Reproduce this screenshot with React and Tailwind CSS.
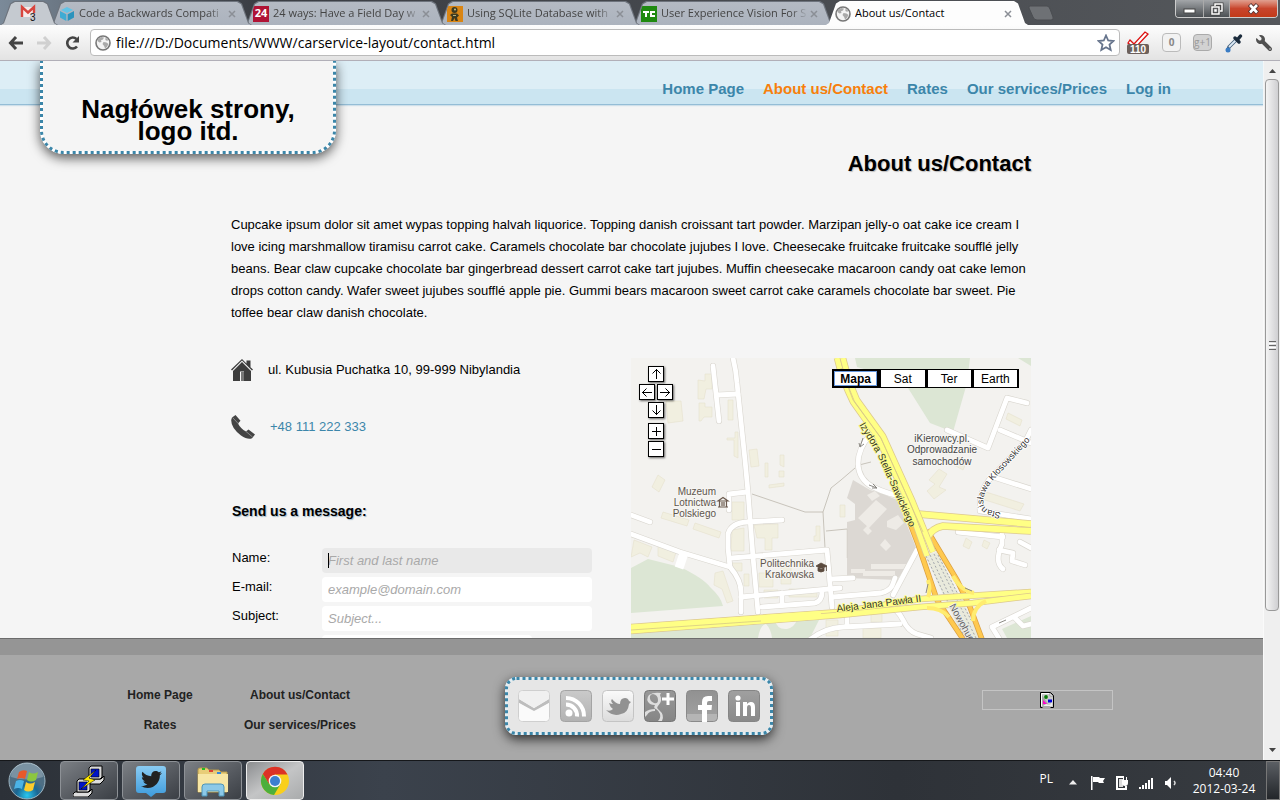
import React from 'react';
import { FaTwitter, FaWrench } from 'react-icons/fa';

const UI = "font-['Open_Sans','Noto_Sans',sans-serif]";

const TAB_CLIP =
  '[clip-path:polygon(0_100%,3px_92%,10px_10%,14px_0,calc(100%_-_14px)_0,calc(100%_-_10px)_10%,calc(100%_-_3px)_92%,100%_100%)]';

function Globe() {
  return (
    <svg width="16" height="16" viewBox="0 0 16 16" className="shrink-0" aria-hidden="true">
      <circle cx="8" cy="8" r="7" fill="#f4f4f4" stroke="#777" strokeWidth="1.6" />
      <path d="M3 4l3-2 3 .6-1 1.9-2 .7.5 1.8-2 .4L2.4 6zM8.5 7l3 .5 2 1.5-1.6 3-1.8 1.6-1-2.7-1.6-1.8z" fill="#aaa" />
      <path d="M10.5 2.5l2.5 2-.6 1.6-2-1.2z" fill="#aaa" />
    </svg>
  );
}

function Gmail() {
  return (
    <svg width="18" height="18" viewBox="0 0 18 18" aria-hidden="true">
      <path d="M1 3h14v10H1z" fill="#f6eaea" />
      <path d="M2 13V3l6 5.500L14 3v10" fill="none" stroke="#d8453e" strokeWidth="2.4" />
      <rect x="10" y="9" width="7" height="9" fill="#c8ccd2" opacity=".85" />
      <text x="10" y="17" fontSize="10" fontFamily="Liberation Sans, sans-serif" fill="#111">3</text>
    </svg>
  );
}

function Cube() {
  return (
    <svg width="16" height="16" viewBox="0 0 16 16" className="shrink-0" aria-hidden="true">
      <path d="M8 1l6 3-6 3-6-3z" fill="#63c3e6" />
      <path d="M1 5l6.3 3.2V15L1 11.5z" fill="#3fabd3" />
      <path d="M15 5L8.7 8.2V15L15 11.5z" fill="#2b93bd" />
    </svg>
  );
}

function TwentyFour() {
  return (
    <span className="flex h-4 w-4 shrink-0 items-center justify-center bg-[#b01335] text-[11px] font-bold text-white">24</span>
  );
}

function Robot() {
  return (
    <svg width="16" height="16" viewBox="0 0 16 16" className="shrink-0" aria-hidden="true">
      <rect width="16" height="16" fill="#d98514" />
      <circle cx="7.5" cy="4" r="3" fill="#3c3a22" />
      <circle cx="8" cy="3.6" r="1" fill="#c6c28a" />
      <path d="M5 7.5h5l2 2-2 2 1 3.5H8.500l-1-3-1.500 3H4l1-4-2-2z" fill="#3c3a22" />
      <path d="M6 9h3v1H6z" fill="#b7b37a" />
    </svg>
  );
}

function TechSite() {
  return (
    <svg width="16" height="16" viewBox="0 0 16 16" className="shrink-0" aria-hidden="true">
      <rect width="16" height="16" fill="#1f8a10" />
      <path d="M2 5h6v2H6v4H4V7H2zM9 5h5v2h-3v2h3v2H9z" fill="#fff" />
    </svg>
  );
}

function Tab({ icon, title, active, layer }) {
  return (
    <div className={`relative -ml-2 h-6 w-[202px] min-w-0 ${layer}`}>
      <div className={`h-full pt-px ${TAB_CLIP} ${active ? 'bg-white' : 'bg-[#6d737c]'}`}>
        <div className={`mx-px flex h-full items-center pr-[13px] pl-2 ${TAB_CLIP} ${active ? 'bg-[#fdfdfd]' : 'bg-gradient-to-b from-[#b4bac3] to-[#acb3be]'}`}>
          {icon}
          <span className={`ml-1 min-w-0 flex-1 overflow-hidden text-[11px] whitespace-nowrap ${active ? 'text-black' : 'text-[#444] [mask-image:linear-gradient(to_right,#000_88%,transparent)]'}`}>
            {title}
          </span>
          <button aria-label="Close tab" className="flex w-3 shrink-0 justify-center">
            <svg width="8" height="8" viewBox="0 0 8 8"><path d="M1 1l6 6M7 1L1 7" stroke="#8b8f96" strokeWidth="1.5" /></svg>
          </button>
        </div>
      </div>
    </div>
  );
}

function TabStrip() {
  return (
    <div className="flex h-[25px] items-end overflow-hidden bg-gradient-to-r from-[#7b8a99] via-[#3a3d43] via-20% to-[#55585c]">
      <div className="relative z-50 h-6 w-[58px] shrink-0">
        <div className={`h-full bg-[#6d737c] pt-px ${TAB_CLIP}`}>
          <div className={`mx-px flex h-full justify-center bg-[#c5cad0] pt-0.5 ${TAB_CLIP}`}><Gmail /></div>
        </div>
      </div>
      <Tab layer="z-40" icon={<Cube />} title="Code a Backwards Compati" />
      <Tab layer="z-30" icon={<TwentyFour />} title="24 ways: Have a Field Day w" />
      <Tab layer="z-20" icon={<Robot />} title="Using SQLite Database with" />
      <Tab layer="z-10" icon={<TechSite />} title="User Experience Vision For S" />
      <Tab layer="z-50" icon={<Globe />} title="About us/Contact" active />
      <button aria-label="New tab" className="mb-1 h-4 w-7 shrink-0">
        <svg width="26" height="16" viewBox="0 0 26 16"><path d="M2 1h17q2 0 3 3l3 8q1 3-2 3H9q-3 0-4-3L1 3q-.5-2 1-2z" fill="#6e7175" stroke="#4a4d51" /></svg>
      </button>
      <div className="mr-[2px] ml-auto flex h-[18px] shrink-0 self-start overflow-hidden rounded-b border border-t-0 border-[#ccc]">
        <button aria-label="Minimize" className="flex w-7 items-center justify-center border-r border-[#aaa] bg-gradient-to-b from-[#a3a6a9] to-[#4c5054]">
          <svg width="13" height="10"><rect x="1" y="5" width="11" height="4" fill="#fff" stroke="#444" /></svg>
        </button>
        <button aria-label="Restore" className="flex w-[26px] items-center justify-center border-r border-[#aaa] bg-gradient-to-b from-[#a3a6a9] to-[#4c5054]">
          <svg width="14" height="14" fill="none"><path d="M5 4V2h7v7h-2M2 5h7v7H2z" stroke="#444" strokeWidth="3" /><path d="M5 4V2h7v7h-2M2 5h7v7H2zM5 8h1v1H5z" stroke="#fff" strokeWidth="1.500" /></svg>
        </button>
        <button aria-label="Close" className="flex w-[47px] items-center justify-center bg-gradient-to-b from-[#e0a090] via-[#c8452c] to-[#c23a18]">
          <svg width="14" height="12"><path d="M2.500 1.500l8 8.500M10.500 1.500l-8 8.500" stroke="#533" strokeWidth="4.500" /><path d="M3 2l7 7.500M10 2L3 9.500" stroke="#fff" strokeWidth="2.600" /></svg>
        </button>
      </div>
    </div>
  );
}

function Toolbar() {
  return (
    <div className="flex h-9 items-center border-b border-[#b1afb8] bg-gradient-to-b from-[#fdfdfd] to-[#e3e3e3] pr-2 pl-2">
      <button aria-label="Back" className="w-7">
        <svg width="16" height="14" fill="none" stroke="#444" strokeWidth="3"><path d="M8 1L2.500 7 8 13M3 7h12" /></svg>
      </button>
      <button aria-label="Forward" className="w-7">
        <svg width="16" height="14" fill="none" stroke="#d0d0d0" strokeWidth="3"><path d="M8 1l5.500 6L8 13M13 7H1" /></svg>
      </button>
      <button aria-label="Reload" className="w-[26px]">
        <svg width="17" height="16" fill="none"><path d="M13 11.500A5.500 5.500 0 1 1 12.500 4" stroke="#444" strokeWidth="2.600" /><path d="M15 1v6.500H8.500z" fill="#444" /></svg>
      </button>
      <div className="flex h-[27px] min-w-0 flex-1 items-center rounded border border-[#bbb] bg-white px-1">
        <Globe />
        <input aria-label="Address" className="ml-[5px] min-w-0 flex-1 bg-transparent text-sm text-black outline-none" defaultValue="file:///D:/Documents/WWW/carservice-layout/contact.html" />
        <button aria-label="Bookmark">
          <svg width="18" height="18" viewBox="0 0 18 18"><path d="M9 1.500l2.200 5 5.300.5-4 3.600 1.200 5.400L9 13.200 4.300 16l1.200-5.400-4-3.600 5.300-.5z" fill="#fff" stroke="#66748c" strokeWidth="1.800" /></svg>
        </button>
      </div>
      <div className="ml-1.5 flex items-center gap-3">
        <button aria-label="Checker, 110 issues">
          <svg width="24" height="24" viewBox="0 0 24 24">
            <path d="M4 9l4 4L19 1l3 2L9 17 2 12z" fill="#fff" stroke="#d11" strokeWidth="1.300" />
            <rect x="1" y="13" width="22" height="10" rx="2" fill="#6c605b" />
            <text x="12" y="22" fontSize="10" fontWeight="700" textAnchor="middle" fill="#fff" fontFamily="Liberation Sans, sans-serif">110</text>
          </svg>
        </button>
        <button className="flex h-[19px] w-[19px] items-center justify-center rounded-sm border border-[#bbb] bg-[#f2f2f2] text-[10px] font-bold text-[#888]">0</button>
        <button className="flex h-[17px] w-[19px] items-center justify-center rounded-sm border border-[#aaa] bg-[#d2d2d2] text-[10px] whitespace-nowrap text-[#999]">g+1</button>
        <button aria-label="Color picker">
          <svg width="20" height="20" viewBox="0 0 20 20"><path d="M13 6L5 14l-1 3" stroke="#45617c" strokeWidth="3.500" fill="none" /><path d="M12 7l-7 7" stroke="#dce9f5" strokeWidth="1.800" /><circle cx="4" cy="17" r="2.500" fill="#3a7cc4" /><path d="M11 5l4 4M14 6l2.500-3" stroke="#1b2b3c" strokeWidth="3.500" strokeLinecap="round" /></svg>
        </button>
        <button aria-label="Settings"><FaWrench size={16} color="#505050" className="-scale-x-100" /></button>
      </div>
    </div>
  );
}

function NavLinks() {
  const link = 'text-[#3c86aa]';
  return (
    <nav className="ml-auto flex gap-[19px] pt-[19px] pr-[92px] text-[15px] leading-[18px] font-bold whitespace-nowrap">
      <a href="#home" className={link}>Home Page</a>
      <a href="#about" className="text-[#f77f0c]">About us/Contact</a>
      <a href="#rates" className={link}>Rates</a>
      <a href="#services" className={link}>Our services/Prices</a>
      <a href="#login" className={link}>Log in</a>
    </nav>
  );
}

function SiteHeader() {
  return (
    <header className="relative z-10 flex h-11 shrink-0 items-start border-b border-[#94bdd6] bg-[linear-gradient(#ddeef6_28px,#cbe5f1_28px)] shadow-[0_1px_1px_#cfe0ea]">
      <div className="relative ml-10 flex h-[93px] w-[296px] shrink-0 items-end justify-center rounded-b-3xl bg-[#f5f5f5] pb-3 shadow-[0_4px_12px_rgba(0,0,0,0.65)] [clip-path:inset(0_-30px_-30px_-30px)]">
        <svg className="absolute inset-0 h-full w-full overflow-hidden" fill="none" aria-hidden="true">
          <rect x="1.5" y="-40" width="293" height="131.500" rx="22" stroke="#fff" strokeWidth="3" />
          <rect x="1.5" y="-40" width="293" height="131.500" rx="22" stroke="#3b86a9" strokeWidth="3" strokeDasharray="3 3" />
        </svg>
        <h1 className="w-60 text-center text-[26px] leading-[22px] font-bold text-black">Nagłówek strony, logo itd.</h1>
      </div>
      <NavLinks />
    </header>
  );
}

const whiteRoads = [
  'M102 0Q105 12 106 25L114 102L117 134L122 199L127 254',
  'M82 8L88 63', 'M86 37L107 36', 'M98 152V136L116 134',
  'M0 157L19 164', 'M0 176L49 194L99 209Q110 222 110 234V254',
  'M151 162L116 164Q100 165 97 176V190L99 209',
  'M101 200L196 192L201 249', 'M110 239L209 230', 'M131 249L184 245Q191 243 191 234', 'M151 235V247',
  'M201 221L222 220', 'M202 239L250 235Q258 233 261 228L264 220', 'M286 192L262 237',
  'M176 284Q192 270 212 269L269 266', 'M216 255V268', 'M255 246Q267 251 272 262T286 276L300 280',
  'M240 76Q227 90 227 106Q228 122 242 129Q258 137 276 139',
  'M396 45L376 40L357 90L316 72', 'M369 72L400 85', 'M362 119L400 131',
  'M400 72L394 84L358 122Q348 134 349 153L400 161',
  'M327 174L372 179', 'M371 171V186Q363 204 372 211', 'M368 192L382 195L381 203L394 207', 'M389 184L400 190',
  'M400 250L361 269L369 282', 'M384 260L392 268L400 266',
];

const buildings = [
  'M35 43h15l2 20-15 2z', 'M67 22l7 1v-7h7v15h-6l-2 10h-6zM68 45h6v4h7v10h-8l-3 4h-2z', 'M97 42h5v20h-5z', 'M96 80h8v-6h3v26l-4-2v-16h-7z',
  'M118 92l8-1 2 17-8 1z', 'M27 117l7 5-6 12-7-5z', 'M149 97h4v12l-4-2zM148 113h5v6h-5z', 'M134 105h3v14h-3z', 'M138 127l15-2v3l-15 2z',
  'M32 154l26 8-2 6-26-8zM64 165l26 9-2 6-26-9z', 'M101 144h12v18h-12zM101 172l12-2v23h-13z', 'M123 167l24-1v14h-6v12h-7v-12h-8z',
  'M3 182l18 7-4 10-8-4-9 4zM27 187l18 7-3 10-15-6z', 'M84 215l8-2 10 30-6 2-5-14-8-4zM101 205h10v8h-8z', 'M113 216h5v12h-5zM185 168h4v15h-6v-5h2z',
  'M128 215h14v14h-14zM150 206h10v20h-10z', 'M298 122l10-11 8 5-8 13 7 3-12 9-7-8 8-7z', 'M326 98l10 5-4 9-9-5z', 'M377 55l14 7-2 6-14-7z',
  'M355 134l38 12-4 7-38-12z', 'M335 180l6 4-3 7-6-3zM353 182l6 3-3 6-5-3z', 'M195 262h12v16h-12zM240 252h11v12h-11zM232 270h18v10h-18z', 'M133 232h14v8h-14zM158 231h28v8h-28z',
  'M209 147h5v12h-5z',
];

function Road({ d, width, color = '#ffff85', edge = '#ddc98e' }) {
  return (
    <g fill="none">
      <path d={d} stroke={edge} strokeWidth={width + 1.5} />
      <path d={d} stroke={color} strokeWidth={width} />
    </g>
  );
}

function MapDrawing() {
  return (
    <svg viewBox="0 0 400 280" className="block h-full w-full" fontFamily="Liberation Sans, sans-serif" role="img" aria-label="Map of the area">
      <rect width="400" height="280" fill="#f3f2ef" />
      <g fill="#dce6d4">
        <path d="M0 210L17 201L49 209Q72 220 79 229Q90 239 92 248L0 255z" />
        <path d="M0 272L127 266L189 260L179 280H0z" />
        <path d="M224 0H339L336 25L322 74L299 65L277 30L250 16L226 9z" />
        <path d="M371 271L400 258V280H376z" />
        <path d="M387 0H400V8z" />
      </g>
      <path d="M127 280q2-13 8-14 5 5 6 14zM144 262q2 10 12 9 8-2 10-10z" fill="#f3f2ef" />
      <path d="M222 122L239 132L252 136L266 142L286 192L266 222L216 220V164L224 162V146L216 140z" fill="#dcd8d3" />
      <path d="M227 160l18-18 11 9-18 19zM236 137l8-4 5 5-8 5zM256 163l11-6 6 8-8 7-9-3zM249 187l5-6 6 7-5 5zM232 172l4-4 5 5-4 4zM240 206h35v5h-35zM232 213h32v5h-32zM220 211h14v4h-14z" fill="#eeebe6" />
      <g fill="#f1efe0" stroke="#e5e1cd" strokeWidth=".6">{buildings.map((d) => <path key={d} d={d} />)}</g>
      <g fill="none" stroke="#bcb8ad" strokeWidth=".8">
        <path d="M121 136L174 154H192L200 130L210 122L224 110M192 154L194 190M195 173L216 171M224 108L240 104" />
        <path d="M216 171V200" opacity=".4" />
      </g>
      <g fill="none" stroke="#d9d6cf" strokeWidth="6" strokeLinecap="round" strokeLinejoin="round">{whiteRoads.map((d) => <path key={d} d={d} />)}</g>
      <g fill="none" stroke="#fff" strokeWidth="4.800" strokeLinecap="round" strokeLinejoin="round">{whiteRoads.map((d) => <path key={d} d={d} />)}</g>
      <path d="M53 195L48 210" stroke="#fff" strokeWidth="9" />

      <path d="M294 197L306 194L350 280H332z" fill="#e9eadc" />
      <g fill="none" stroke="#8f94a0" strokeWidth=".8" strokeDasharray="2 2">
        <path d="M295 198L334 280M299 197L339 280M303 196L345 280M307 197L340 262" />
      </g>
      <Road d="M279 165L287 186L306 242L334 284" width={4} color="#ffc94f" edge="#dba040" />
      <Road d="M296 172L326 222L339 249L352 284" width={4} color="#ffc94f" edge="#dba040" />
      <Road d="M287 156L400 166" width={6} />
      <Road d="M296 180Q301 170 312 168L400 173" width={6} />
      <Road d="M0 269L209 254L289 241L400 234" width={5} />
      <Road d="M0 273L209 257L289 249L342 245L400 238" width={5} />
      <path d="M0 271L190 257" stroke="#ffff85" strokeWidth="8" />
      <Road d="M206 0Q211 22 222 44L246 78L275 139L296 198" width={5} />
      <Road d="M212 0Q218 24 226 42L252 78L281 142L302 194" width={5} />
      <path d="M297 222Q300 232 297 239M322 218Q330 233 343 235M342 263Q342 249 355 243M296 250Q310 250 318 259" fill="none" stroke="#ffec70" strokeWidth="4" />
      <path d="M0 272L130 263M210 10L222 42L250 80L292 174" stroke="#d7c985" strokeWidth=".8" fill="none" />
      <path d="M232 80l-3 9m0 0l-1-4m1 4l4-3M238 127l8 3m0 0l-4-4m4 4h-5M295 235l2-9M334 230l7 3M368 265l7-3" stroke="#8c8a84" fill="none" />

      <g fontSize="10" fill="#5e554d" stroke="#f7f6f3" strokeWidth="2" paintOrder="stroke" strokeLinejoin="round">
        <text x="85" y="137" textAnchor="end">Muzeum</text>
        <text x="85" y="148" textAnchor="end">Lotnictwa</text>
        <text x="85" y="159" textAnchor="end">Polskiego</text>
        <text x="183" y="209" textAnchor="end">Politechnika</text>
        <text x="183" y="220" textAnchor="end">Krakowska</text>
      </g>
      <g fontSize="10" fill="#444" stroke="#f7f6f3" strokeWidth="2" paintOrder="stroke" textAnchor="middle">
        <text x="311" y="84">iKierowcy.pl.</text>
        <text x="311" y="95">Odprowadzanie</text>
        <text x="311" y="107">samochodów</text>
      </g>
      <path id="izydora" d="M228 67L246 96L278 168" fill="none" />
      <path id="klos" d="M370 155L359 152Q350 149 353 138Q356 128 366 118L404 77" fill="none" />
      <g fontSize="10" fill="#333">
        <text stroke="#ffff85" strokeWidth="1.500" paintOrder="stroke"><textPath href="#izydora">Izydora Stella-Sawickiego</textPath></text>
        <text fontSize="9" stroke="#fff" strokeWidth="1.500" paintOrder="stroke"><textPath href="#klos">Stanisława Kłosowskiego</textPath></text>
        <text transform="translate(206 254) rotate(-7)" stroke="#ffff85" strokeWidth="1.500" paintOrder="stroke">Aleja Jana Pawła II</text>
        <text transform="translate(318 248) rotate(61)" fill="#666" stroke="#eee" strokeWidth="1.500" paintOrder="stroke">Nowohucka</text>
      </g>
      <path d="M87 143l5-3.500 5 3.500zM88.500 143v6M95.500 143v6M91 144v4M93 144v4M87 149h10" fill="none" stroke="#6b5a4e" strokeWidth="1.200" />
      <path d="M185 208l5-3 6 3-6 3zM187 210v3q3 2 6 0v-3M195.500 208v5" fill="#5a4a3e" stroke="#5a4a3e" strokeWidth=".8" />
    </svg>
  );
}

function MapButton({ label, d }) {
  return (
    <button aria-label={label} className="h-4 w-4 border border-black bg-white shadow-[1px_1px_2px_rgba(0,0,0,0.6)]">
      <svg width="14" height="14" viewBox="0 0 14 14" fill="none" stroke="#000"><path d={d} /></svg>
    </button>
  );
}

function LocationMap() {
  const type = 'flex-1 border border-l-2 border-black bg-white leading-4 first:border-2';
  return (
    <div className="relative h-[280px] w-[400px] shrink-0 overflow-hidden">
      <MapDrawing />
      <div className="absolute top-2 left-2 flex w-[34px] flex-col items-center gap-0.5">
        <MapButton label="Pan up" d="M7.500 2v10M3.500 6.500l4-4 4 4" />
        <div className="flex w-full justify-between">
          <MapButton label="Pan left" d="M2 7.500h10M6.500 3.500l-4 4 4 4" />
          <MapButton label="Pan right" d="M2 7.500h10M7.500 3.500l4 4-4 4" />
        </div>
        <MapButton label="Pan down" d="M7.500 2v10M3.500 7.500l4 4 4-4" />
        <div className="flex flex-col gap-0.5 pt-[3px]">
          <MapButton label="Zoom in" d="M7.500 3v9M3 7.500h9" />
          <MapButton label="Zoom out" d="M3 7.500h9" />
        </div>
      </div>
      <div className="absolute top-[11px] right-3 flex h-[19px] w-[187px] border-r border-black text-xs text-black">
        <button className={`${type} font-bold shadow-[inset_0_0_0_1px_#6a9be0]`}>Mapa</button>
        <button className={type}>Sat</button>
        <button className={type}>Ter</button>
        <button className={type}>Earth</button>
      </div>
    </div>
  );
}

const field = 'h-[25px] w-[270px] rounded px-1.5 text-[13px] text-black italic outline-none placeholder:text-[#a9a9a9]';

function Contact() {
  return (
    <div className="flex justify-between">
      <div className="w-[361px] shrink-0">
        <p className="flex h-6 items-center gap-[15px]">
          <svg width="22" height="22" viewBox="0 0 22 22" className="shrink-0" aria-hidden="true">
            <path d="M11 0l4.500 4.500V1.500h4V8.200L22 10.500l-1 1-10-10-10 10-1-1z" fill="#3d3d3d" />
            <path d="M11 3l9 9v10h-7v-9.500H9V22H2V12z" fill="#3d3d3d" />
            <path d="M10 13h3v9h-3z" fill="#777" />
          </svg>
          ul. Kubusia Puchatka 10, 99-999 Nibylandia
        </p>
        <p className="mt-[33px] flex h-6 items-center gap-[15px]">
          <svg width="24" height="24" viewBox="0 0 24 24" className="shrink-0" aria-hidden="true">
            <path d="M1 2.500L4.500 0l5 5.800L7 8.500q2.500 5 8 8l2.500-2 6.500 5-3 3.700q-4 2-11-2.700Q0 13 .2 5z" fill="#444" />
            <path d="M1.500 2.500l6 6.300M15 16.500l6.500 5.500" stroke="#999" strokeWidth=".8" />
          </svg>
          <a href="tel:+48111222333" className="text-[#3c86aa]">+48 111 222 333</a>
        </p>
        <form className="mt-[63px] pl-px">
          <h3 className="text-sm leading-[18px] font-bold [text-shadow:1px_1px_1px_#9db9cc]">Send us a message:</h3>
          <div className="mt-7 flex flex-col gap-1 leading-5">
            <div className="flex justify-between">
              <label htmlFor="name">Name:</label>
              <div className="relative flex">
                <input id="name" placeholder="First and last name" className={`${field} bg-[#e9e9e9]`} />
                <span className="absolute top-[5px] left-1.5 h-[15px] w-px bg-black" />
              </div>
            </div>
            <div className="flex justify-between">
              <label htmlFor="email">E-mail:</label>
              <input id="email" type="email" placeholder="example@domain.com" className={`${field} bg-white`} />
            </div>
            <div className="flex justify-between">
              <label htmlFor="subject">Subject:</label>
              <input id="subject" placeholder="Subject..." className={`${field} bg-white`} />
            </div>
            <div className="flex pl-[90px]">
              <textarea aria-label="Message" className="h-24 w-[210px] resize-none rounded bg-white" />
            </div>
          </div>
        </form>
      </div>
      <LocationMap />
    </div>
  );
}

function SocialIcon({ label, id, from, to, stroke, children }) {
  return (
    <a href={`#${id}`} aria-label={label}>
      <svg width="32" height="32" viewBox="0 0 32 32">
        <defs><linearGradient id={id} x2="0" y2="1"><stop stopColor={from} /><stop offset="1" stopColor={to} /></linearGradient></defs>
        <rect x=".5" y=".5" width="31" height="31" rx="4" fill={`url(#${id})`} stroke={stroke} />
        {children}
      </svg>
    </a>
  );
}

function SocialLinks() {
  return (
    <div className="relative flex gap-2.5 rounded-xl bg-[#e6e6e6] px-[13px] py-[13px] shadow-[0_4px_12px_rgba(0,0,0,0.75)]">
      <svg className="pointer-events-none absolute inset-0 h-full w-full" fill="none" aria-hidden="true">
        <rect x="1.5" y="1.5" width="265" height="55" rx="10" stroke="#e6eef2" strokeWidth="3" />
        <rect x="1.5" y="1.5" width="265" height="55" rx="10" stroke="#3b86a9" strokeWidth="3" strokeDasharray="3 3" />
      </svg>
      <SocialIcon label="Mail" id="mail" from="#f6f6f6" to="#fdfdfd" stroke="#cfcfcf">
        <path d="M1 9v4l15 9 15-9V9L16 18z" fill="#bdbdbd" />
        <path d="M1 9V5q0-4 4-4h22q4 0 4 4v4L16 18z" fill="#f0f0f0" />
        <path d="M1 13l15 8 15-8v14q0 4-4 4H5q-4 0-4-4z" fill="#fafafa" />
      </SocialIcon>
      <SocialIcon label="RSS" id="rss" from="#cacaca" to="#b2b2b2" stroke="#a4a4a4">
        <circle cx="9" cy="23" r="3.500" fill="#fff" /><path d="M6 14.500a11 11 0 0 1 11 12M6 8a18 18 0 0 1 18 18.500" stroke="#fff" strokeWidth="4" fill="none" />
      </SocialIcon>
      <SocialIcon label="Twitter" id="twitter" from="#fafafa" to="#dcdcdc" stroke="#c4c4c4">
        <path d="M4 20q4 2 7-1-3-2-4-6 2 1 4 1-3-3-1-5 4 5 8 5 0-6 5-6 3 0 4 3l2 1-2 2q-1 9-8 10-8 3-15-4z" fill="#929292" />
      </SocialIcon>
      <SocialIcon label="Google Plus" id="gplus" from="#989898" to="#858585" stroke="#777777">
        <path d="M17 3q-8-1-12 2-4 5 1 9 2 1 5 1-2 3 1 4 3 2 4 5 1 4-2 7h4q3-6-3-11-3-2-1-4 5-5 2-11zM9 4q5 1 5 6 0 4-4 3-5-2-4-7 1-2 3-2z" fill="#dedede" fillRule="evenodd" />
        <path d="M1 22q4-3 10-3v2q-6 0-8 4l-2 2z" fill="#dedede" />
        <path d="M24 3v12M18 9h12" stroke="#fff" strokeWidth="3" />
      </SocialIcon>
      <SocialIcon label="Facebook" id="facebook" from="#919191" to="#a3a3a3" stroke="#8a8a8a">
        <path d="M1 24h30v4q-1 3-4 3H5q-4 0-4-4z" fill="#b5b5b5" />
        <path d="M16 32V20h-4v-5h4v-3q0-6 6-6h4v5h-3q-2 0-2 2v2h5l-.5 5H21v12z" fill="#fff" />
      </SocialIcon>
      <SocialIcon label="LinkedIn" id="linkedin" from="#a0a0a0" to="#8a8a8a" stroke="#858585">
        <path d="M8 12h4v14H8zM15 12h4v2q2-2.300 4-2 4 0 4 5v9h-4v-8q0-3-2-3t-2 3v8h-4z" fill="#fff" /><circle cx="10" cy="8" r="2.600" fill="#fff" />
      </SocialIcon>
    </div>
  );
}

function SiteFooter() {
  return (
    <footer className="relative z-10 grid h-[122px] shrink-0 grid-cols-[460fr_358fr_445fr] border-t border-[#6c6c6c] bg-[linear-gradient(#959595_16px,#a8a8a8_16px)]">
      <nav className="grid w-[280px] grid-cols-2 gap-y-3 justify-self-center self-start pt-[47px] text-center text-xs leading-[18px] font-bold text-[#222]">
        <a href="#home">Home Page</a>
        <a href="#about">About us/Contact</a>
        <a href="#rates">Rates</a>
        <a href="#services">Our services/Prices</a>
      </nav>
      <div className="self-start justify-self-center pt-[38px]"><SocialLinks /></div>
      <div className="flex justify-center pt-[51px] pl-[13px]">
        <div className="flex h-5 w-[131px] items-center justify-center border border-[#c4c4c4]">
          <svg width="14" height="16" viewBox="0 0 14 16" role="img" aria-label="Missing image">
            <path d="M.5.500h10l3 3V15.500h-3M.5 .5v15h2" fill="#ccc" stroke="#000" />
            <path d="M1.500 14V1.500h8" stroke="#fff" fill="none" /><path d="M10 1v3h3z" fill="#fff" stroke="#666" strokeWidth=".5" />
            <circle cx="6" cy="5" r="1.900" fill="#087a08" /><path d="M3 8l4 4H3z" fill="#f0c" /><path d="M8 7.500h4v3H8z" fill="#00d" />
            <path d="M3 14l3-2 4 1 2-3v4z" fill="#eee" />
          </svg>
        </div>
      </div>
    </footer>
  );
}

function Scrollbar() {
  return (
    <div className="flex w-[17px] shrink-0 flex-col items-center border-l border-[#fafafa] bg-[#efefef] py-1.5" aria-hidden="true">
      <svg width="9" height="7"><path d="M1 6l3.500-4L8 6z" fill="#444" /></svg>
      <div className="mt-[5px] flex h-[532px] w-[14px] flex-col items-center justify-center gap-px rounded-sm border border-[#999] bg-gradient-to-r from-[#f4f4f4] to-[#cfcfd2]">
        <span className="h-px w-[7px] bg-[#666]" /><span className="h-px w-[7px] bg-white" />
        <span className="h-px w-[7px] bg-[#666]" /><span className="h-px w-[7px] bg-white" />
        <span className="h-px w-[7px] bg-[#666]" />
      </div>
      <svg width="9" height="7" className="mt-auto"><path d="M1 1l3.500 4L8 1z" fill="#444" /></svg>
    </div>
  );
}

function TaskButton({ label, active, children }) {
  return (
    <button
      aria-label={label}
      className={`flex h-[39px] w-[58px] items-center justify-center rounded-sm border ${active ? 'border-[#eee] bg-gradient-to-br from-[#8c8e90] via-[#c4c5c6] to-[#a9abac]' : 'border-[#8d9196] bg-gradient-to-br from-[#7c8085] via-[#5a5e64] to-[#3b3f45]'}`}
    >
      {children}
    </button>
  );
}

function Computer({ x, y }) {
  return (
    <g transform={`translate(${x} ${y})`}>
      <path d="M1 13h14l3-3v4l-4 4H-1v-3z" fill="#ddd" stroke="#000" />
      <path d="M3 2l2-2h11v11l-2 2H3z" fill="#d8d8d8" stroke="#000" />
      <path d="M5 3h8v8H5z" fill="#0014c8" stroke="#000" strokeWidth=".6" />
    </g>
  );
}

function Taskbar() {
  return (
    <div className="flex h-10 shrink-0 items-stretch border-t border-[#15171a] bg-[linear-gradient(to_right,#2c3138,#3b424c_30%,#2e3238_70%,#373b40)] text-white">
      <button aria-label="Start" className="flex w-[54px] items-center justify-center">
        <svg width="38" height="38" viewBox="0 0 38 38">
          <defs><radialGradient id="orb" cy=".9"><stop stopColor="#29c7ee" /><stop offset=".6" stopColor="#1a6794" /><stop offset="1" stopColor="#4e6e83" /></radialGradient></defs>
          <circle cx="19" cy="19" r="18" fill="url(#orb)" stroke="#9db5c2" />
          <path d="M3 15a16 14 0 0 1 32 0q-16 5-32 0z" fill="#fff" opacity=".25" />
          <path d="M11 10q4-3 8-1l-2 8q-4-2-8 0z" fill="#e8592b" /><path d="M21 10q4 3 9 0l-2 8q-5 3-9 0z" fill="#8cc63f" />
          <path d="M8 19q4-2 8 0l-2 8q-4-2-8 0z" fill="#4bb3e6" /><path d="M18 20q4 3 9 0l-2 8q-5 3-9 0z" fill="#fccc2c" />
        </svg>
      </button>
      <div className="ml-1.5 flex gap-1">
        <TaskButton label="Terminal client">
          <svg width="32" height="32" viewBox="0 0 32 32"><Computer x={13} y={1} /><Computer x={1} y={14} /><path d="M23 5L10 15l6 1-8 8 14-9-6-2z" fill="#ffe800" stroke="#000" strokeWidth=".5" /></svg>
        </TaskButton>
        <TaskButton label="Twitter client">
          <svg width="32" height="34" viewBox="0 0 32 34">
            <defs><linearGradient id="bubble" x2="0" y2="1"><stop stopColor="#8acbf2" /><stop offset="1" stopColor="#3d9bdc" /></linearGradient></defs>
            <path d="M4 2h24q3 0 3 3v21q0 3-3 3h-7l-5 4-5-4H4q-3 0-3-3V5q0-3 3-3z" fill="url(#bubble)" />
            <FaTwitter x={6} y={5} size={21} color="#222" />
          </svg>
        </TaskButton>
        <TaskButton label="Explorer">
          <svg width="34" height="32" viewBox="0 0 34 32">
            <path d="M2 5q0-2 2-2h7l2 2h10l2 2h6v20H2z" fill="#e8cd78" stroke="#b79b4c" />
            <path d="M6 3h3v2H6z" fill="#2b2" /><path d="M13 5h4v2h-4z" fill="#d43" /><path d="M21 7h4v2h-4z" fill="#38d" />
            <path d="M2 9h30v18H2z" fill="#f7e6a5" /><path d="M6 31V22q0-3 3-3h16q3 0 3 3v9h-5v-5H11v5z" fill="#8cc9e8" stroke="#4d94b8" />
          </svg>
        </TaskButton>
        <TaskButton label="Browser" active>
          <svg width="30" height="30" viewBox="0 0 30 30">
            <circle cx="15" cy="15" r="14" fill="#f9cf1c" />
            <path d="M2.800 8A14 14 0 0 1 27.500 8.500H15L9 18z" fill="#dc3226" />
            <path d="M2.800 8A14 14 0 0 0 14 29l6.500-11-11 .5z" fill="#4caf3c" />
            <circle cx="15" cy="15" r="6.300" fill="#f5f5f5" /><circle cx="15" cy="15" r="5" fill="#3c7fd0" />
          </svg>
        </TaskButton>
      </div>
      <div className="ml-auto flex items-center">
        <span className="mr-4 mb-1 text-xs">PL</span>
        <svg width="8" height="5" className="mt-1"><path d="M0 4.500L4 0l4 4.500z" fill="#eee" /></svg>
        <svg width="16" height="16" className="mt-1 ml-[13px]" fill="#fff"><path d="M1 1h1.500v14H1zM3 2h6l1 1h5l-2 3 1 2H9l-1-1H3z" /></svg>
        <svg width="16" height="16" className="mt-1 ml-2" fill="none"><path d="M10 2H3v12h9v-3" stroke="#fff" strokeWidth="2" /><path d="M5 4h4v8H5z" fill="#ddd" /><path d="M8 5h6v3q0 3-3 3T8 8zM9 2h1v3H9zM12 2h1v3h-1z" fill="#fff" /></svg>
        <svg width="16" height="16" className="mt-1 ml-2" fill="#fff"><path d="M1 12h2v2H1zM4 10h2v4H4zM7 8h2v6H7zM10 5h2v9h-2zM13 3h2v11h-2z" /></svg>
        <svg width="16" height="16" className="mt-1 ml-2.5"><path d="M1 6h2l4-4v12l-4-4H1z" fill="#fff" /><path d="M10 6q2 2 0 4" stroke="#ddd" fill="none" strokeWidth="1.500" /></svg>
        <div className="ml-3 w-16 text-center text-xs leading-4 whitespace-nowrap"><div>04:40</div><div>2012-03-24</div></div>
        <button aria-label="Show desktop" className="ml-2.5 h-full w-[14px] border border-[#777] bg-gradient-to-b from-[#5b5f64] to-[#23262a]" />
      </div>
    </div>
  );
}

export default function App() {
  return (
    <div className="flex h-screen flex-col overflow-hidden bg-[#f5f5f5]">
      <div className={UI}>
        <TabStrip />
        <Toolbar />
      </div>
      <div className="flex min-h-0 flex-1 font-['Liberation_Sans',Arial,sans-serif] text-black">
        <div className="flex min-w-0 flex-1 flex-col">
          <SiteHeader />
          <main className="min-h-0 flex-1 overflow-hidden pr-px text-[13px]">
            <div className="mx-auto w-full max-w-[800px] pt-[45px]">
              <h2 className="text-right text-[22px] leading-7 font-bold [text-shadow:1px_1px_1px_#bbb]">About us/Contact</h2>
              <p className="mt-9 mb-[34px] leading-[22px]">
                Cupcake ipsum dolor sit amet wypas topping halvah liquorice. Topping danish croissant tart powder. Marzipan jelly-o oat cake ice cream I love icing marshmallow tiramisu carrot cake. Caramels chocolate bar chocolate jujubes I love. Cheesecake fruitcake fruitcake soufflé jelly beans. Bear claw cupcake chocolate bar gingerbread dessert carrot cake tart jujubes. Muffin cheesecake macaroon candy oat cake lemon drops cotton candy. Wafer sweet jujubes soufflé apple pie. Gummi bears macaroon sweet carrot cake caramels chocolate bar sweet. Pie toffee bear claw danish chocolate.
              </p>
              <Contact />
            </div>
          </main>
          <SiteFooter />
        </div>
        <Scrollbar />
      </div>
      <div className={UI}>
        <Taskbar />
      </div>
    </div>
  );
}
